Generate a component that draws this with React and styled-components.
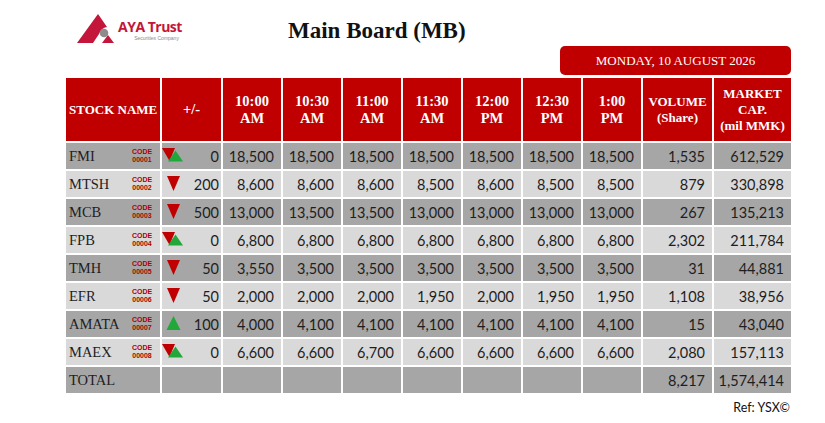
import React from 'react';
import styled, { createGlobalStyle } from 'styled-components';

const GlobalStyle = createGlobalStyle`
  html, body {
    margin: 0;
    padding: 0;
    background: #fff;
  }
`;

const COLS = '94px 59px repeat(7, 58px) 69px 77px';
const RED = '#c00000';

const Page = styled.div`
  width: 725px;
  margin-left: 66px;
  padding-top: 14px;
  font-family: 'Liberation Serif', serif;
`;

const TopBar = styled.div`
  display: flex;
  align-items: flex-start;
  height: 32px;
  padding-left: 11px;
`;

const Logo = styled.div`
  display: flex;
  align-items: flex-start;
  width: 116px;
  gap: 3px;
`;

const LogoWords = styled.div`
  display: flex;
  flex-direction: column;
  align-items: flex-end;
  padding-top: 5px;
`;

const LogoName = styled.div`
  font-family: 'Open Sans', 'Liberation Sans', sans-serif;
  font-weight: 700;
  font-size: 14px;
  line-height: 15px;
  letter-spacing: -0.5px;
  color: #c4163a;
`;

const LogoSub = styled.div`
  font-family: 'Liberation Sans', sans-serif;
  font-size: 5px;
  line-height: 6px;
  color: #8a8a8a;
  margin-top: 1px;
  margin-right: 3px;
`;

const Title = styled.h1`
  margin: 4px 0 0 95px;
  font-family: 'Liberation Serif', serif;
  font-weight: 700;
  font-size: 23px;
  line-height: 26px;
  color: #111;
`;

const DateRow = styled.div`
  display: flex;
  justify-content: flex-end;
  margin-bottom: 3px;
`;

const DatePill = styled.div`
  width: 231px;
  height: 29px;
  background: ${RED};
  border-radius: 5px;
  color: #fff;
  font-size: 13px;
  display: flex;
  align-items: center;
  justify-content: center;
`;

const Board = styled.div`
  display: flex;
  flex-direction: column;
  gap: 2px;
`;

const Row = styled.div`
  display: grid;
  grid-template-columns: ${COLS};
  gap: 2px;
  height: ${p => (p.$head ? '63px' : '26px')};
`;

const HeadCell = styled.div`
  background: ${RED};
  color: #fff;
  font-weight: 700;
  font-size: ${p => (p.$big ? '14.5px' : '13px')};
  line-height: ${p => (p.$big ? '17px' : '16px')};
  display: flex;
  align-items: center;
  justify-content: ${p => (p.$left ? 'flex-start' : 'center')};
  text-align: center;
  padding-left: ${p => (p.$left ? '3px' : '0')};
  white-space: pre-line;
`;

const Cell = styled.div`
  background: ${p => (p.$dark ? '#a6a6a6' : '#d9d9d9')};
  color: #1e1e1e;
  font-family: 'Lato', 'Liberation Sans', sans-serif;
  font-size: 14.5px;
  display: flex;
  align-items: center;
  justify-content: flex-end;
  padding-right: 7px;
`;

const NameCell = styled(Cell)`
  display: grid;
  grid-template-columns: 62px 1fr;
  align-items: center;
  padding: 0 0 0 3px;
  font-family: 'Liberation Serif', serif;
  font-size: 14.5px;
`;

const ChangeCell = styled(Cell)`
  justify-content: space-between;
  padding-right: 2px;
`;

const Code = styled.div`
  font-family: 'Liberation Sans', sans-serif;
  font-weight: 700;
  font-size: 7px;
  line-height: 8px;
  color: #b00000;
  text-align: center;
  width: 22px;
`;

const Footer = styled.div`
  text-align: right;
  font-family: 'Lato', 'Liberation Sans', sans-serif;
  font-size: 12.5px;
  color: #111;
  margin-top: 7px;
  padding-right: 1px;
`;

const AyaMark = () => (
  <svg width="38" height="30" viewBox="0 0 38 30">
    <path d="M0 29 L21 0 L30 13 Q24 14 22 20 L16 29 Z" fill="#c4163a" />
    <circle cx="27" cy="19" r="4.3" fill="#8c8c8c" />
    <path d="M25 29 L31 21 L37 29 Z" fill="#c4163a" />
  </svg>
);

const Trend = ({ dir }) => (
  <svg width="22" height="16" viewBox="0 0 22 16">
    {dir === 'flat' && (
      <>
        <polygon points="0,0 13,0 7.5,13" fill="#c00000" />
        <polygon points="6,13.5 13.5,2.5 21,13.5" fill="#22a83a" />
      </>
    )}
    {dir === 'down' && <polygon points="5,0 18,0 11.5,15" fill="#c00000" />}
    {dir === 'up' && <polygon points="11.5,0 18.5,14 4.5,14" fill="#22a83a" />}
  </svg>
);

const times = ['10:00\nAM', '10:30\nAM', '11:00\nAM', '11:30\nAM', '12:00\nPM', '12:30\nPM', '1:00\nPM'];

const stocks = [
  { name: 'FMI', code: '00001', dir: 'flat', chg: '0', prices: ['18,500', '18,500', '18,500', '18,500', '18,500', '18,500', '18,500'], vol: '1,535', cap: '612,529' },
  { name: 'MTSH', code: '00002', dir: 'down', chg: '200', prices: ['8,600', '8,600', '8,600', '8,500', '8,600', '8,500', '8,500'], vol: '879', cap: '330,898' },
  { name: 'MCB', code: '00003', dir: 'down', chg: '500', prices: ['13,000', '13,500', '13,500', '13,000', '13,000', '13,000', '13,000'], vol: '267', cap: '135,213' },
  { name: 'FPB', code: '00004', dir: 'flat', chg: '0', prices: ['6,800', '6,800', '6,800', '6,800', '6,800', '6,800', '6,800'], vol: '2,302', cap: '211,784' },
  { name: 'TMH', code: '00005', dir: 'down', chg: '50', prices: ['3,550', '3,500', '3,500', '3,500', '3,500', '3,500', '3,500'], vol: '31', cap: '44,881' },
  { name: 'EFR', code: '00006', dir: 'down', chg: '50', prices: ['2,000', '2,000', '2,000', '1,950', '2,000', '1,950', '1,950'], vol: '1,108', cap: '38,956' },
  { name: 'AMATA', code: '00007', dir: 'up', chg: '100', prices: ['4,000', '4,100', '4,100', '4,100', '4,100', '4,100', '4,100'], vol: '15', cap: '43,040' },
  { name: 'MAEX', code: '00008', dir: 'flat', chg: '0', prices: ['6,600', '6,600', '6,700', '6,600', '6,600', '6,600', '6,600'], vol: '2,080', cap: '157,113' },
];

const App = () => {
  return (
    <Page>
      <GlobalStyle />
      <TopBar>
        <Logo>
          <AyaMark />
          <LogoWords>
            <LogoName>AYA Trust</LogoName>
            <LogoSub>Securities Company</LogoSub>
          </LogoWords>
        </Logo>
        <Title>Main Board (MB)</Title>
      </TopBar>

      <DateRow>
        <DatePill>MONDAY, 10 AUGUST 2026</DatePill>
      </DateRow>

      <Board>
        <Row $head>
          <HeadCell $left>STOCK NAME</HeadCell>
          <HeadCell $big>+/-</HeadCell>
          {times.map(t => <HeadCell key={t} $big>{t}</HeadCell>)}
          <HeadCell>{'VOLUME\n(Share)'}</HeadCell>
          <HeadCell>{'MARKET\nCAP.\n(mil MMK)'}</HeadCell>
        </Row>

        {stocks.map((s, i) => {
          const dark = i % 2 === 0;
          return (
            <Row key={s.name}>
              <NameCell $dark={dark}>
                <span>{s.name}</span>
                <Code>CODE<br />{s.code}</Code>
              </NameCell>
              <ChangeCell $dark={dark}>
                <Trend dir={s.dir} />
                <span>{s.chg}</span>
              </ChangeCell>
              {s.prices.map((p, j) => <Cell key={j} $dark={dark}>{p}</Cell>)}
              <Cell $dark={dark}>{s.vol}</Cell>
              <Cell $dark={dark}>{s.cap}</Cell>
            </Row>
          );
        })}

        <Row>
          <NameCell $dark>TOTAL</NameCell>
          {Array.from({ length: 8 }).map((_, j) => <Cell key={j} $dark />)}
          <Cell $dark>8,217</Cell>
          <Cell $dark>1,574,414</Cell>
        </Row>
      </Board>

      <Footer>Ref: YSX©</Footer>
    </Page>
  );
};

export default App;
